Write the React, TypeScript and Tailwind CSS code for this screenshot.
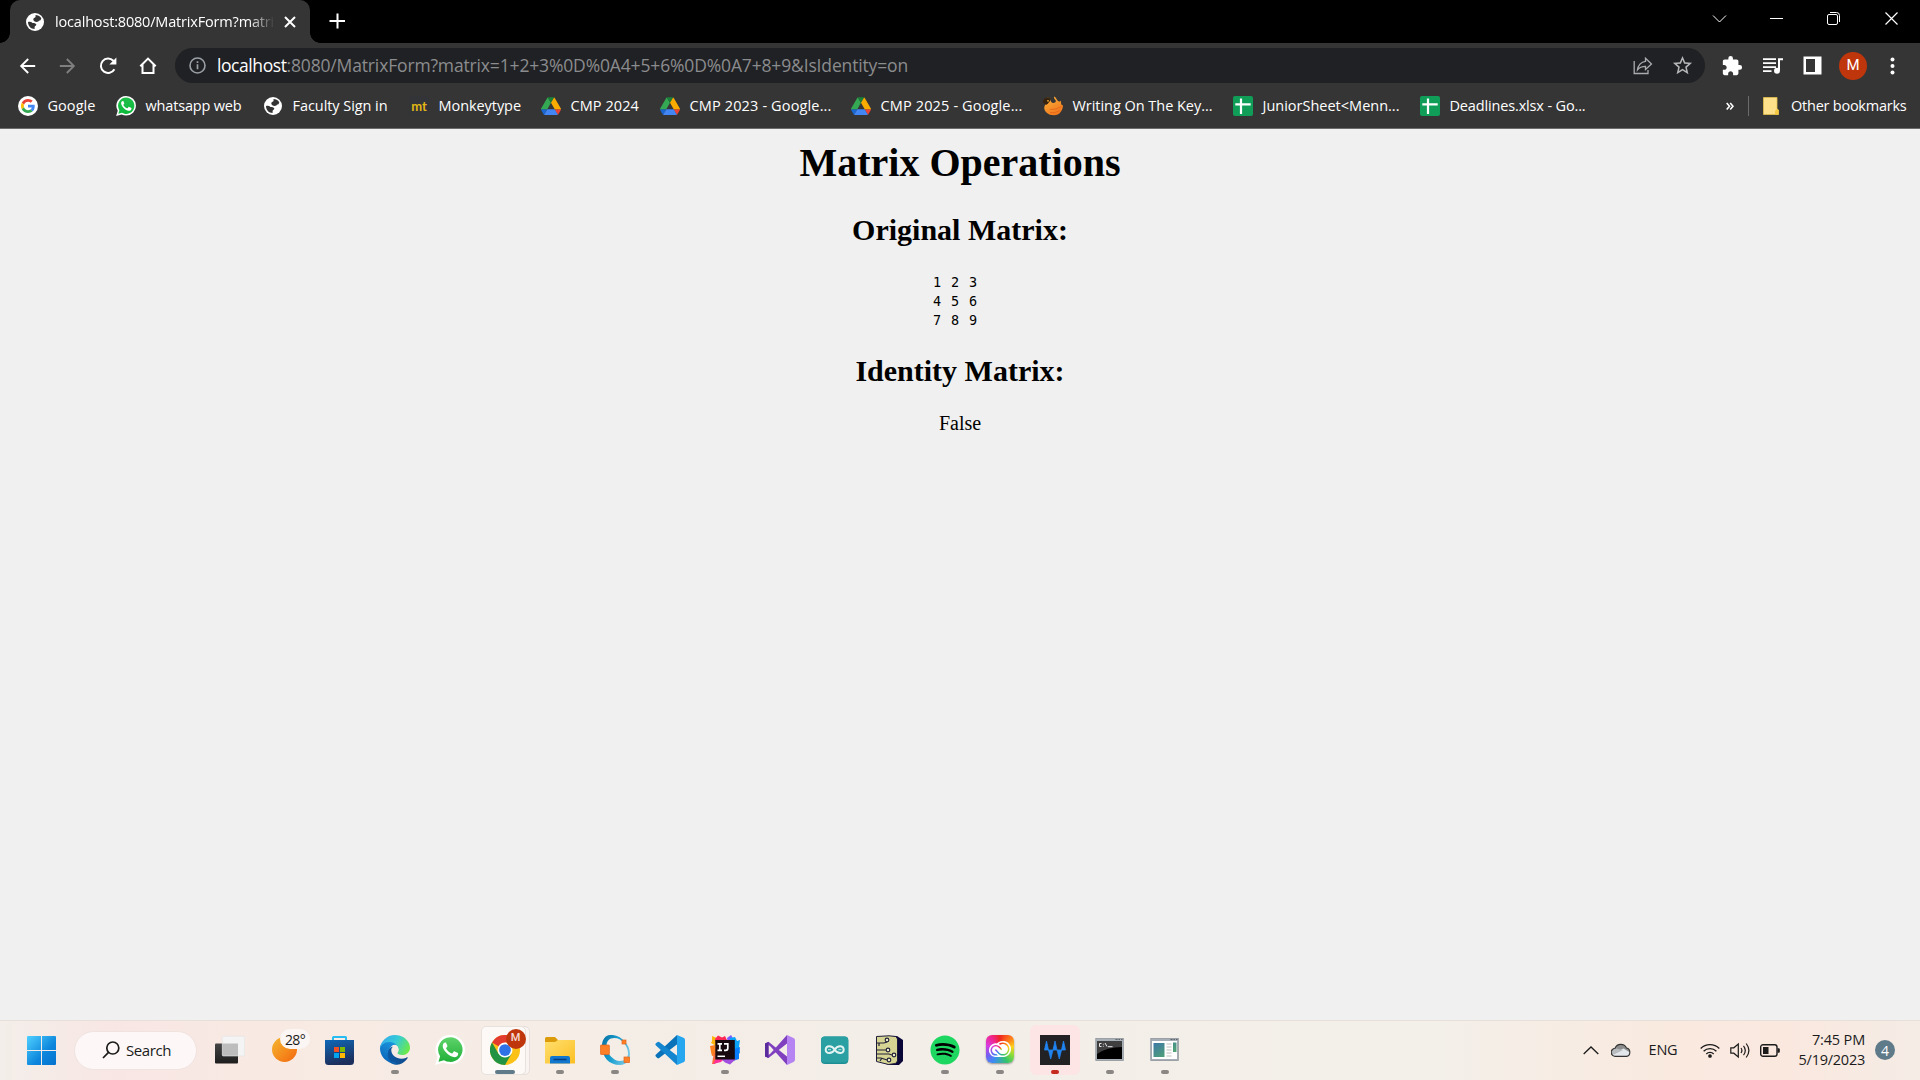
import React, { useLayoutEffect, useRef, useState } from "react";
import {
  MdArrowBack,
  MdArrowForward,
  MdExtension,
  MdStarBorder,
} from "react-icons/md";
import { FaSpotify } from "react-icons/fa";
import { SiAdobecreativecloud } from "react-icons/si";

/** Single line of text whose tracking is adjusted to fill a given width. */
function Fit({ w, children, className = "" }: { w: number; children: string; className?: string }) {
  const ref = useRef<HTMLSpanElement>(null);
  const [spacing, setSpacing] = useState(0);
  useLayoutEffect(() => {
    const natural = ref.current!.getBoundingClientRect().width;
    setSpacing((w - natural) / children.length);
  }, [w, children]);
  return (
    <span ref={ref} className={"inline-block whitespace-pre " + className} style={{ letterSpacing: spacing }}>
      {children}
    </span>
  );
}

/* ---------- small glyphs ---------- */

const Drive = () => (
  <svg width="20" height="20" viewBox="0 0 87.3 87.3">
    <g transform="translate(0 5)">
      <path d="m6.6 66.85 3.85 6.65c.8 1.4 1.95 2.5 3.3 3.3l13.75-23.8h-27.5c0 1.55.4 3.1 1.2 4.5z" fill="#1967d2" />
      <path d="m43.65 25-13.75-23.8c-1.35.8-2.5 1.9-3.3 3.3l-25.4 44a9.06 9.06 0 0 0 -1.2 4.5h27.5z" fill="#34a853" />
      <path d="m73.55 76.8c1.35-.8 2.5-1.9 3.3-3.3l1.6-2.75 7.65-13.25c.8-1.4 1.2-2.95 1.2-4.5h-27.5l5.85 11.5z" fill="#ea4335" />
      <path d="m43.65 25 13.75-23.8c-1.35-.8-2.9-1.2-4.5-1.2h-18.5c-1.6 0-3.15.45-4.5 1.2z" fill="#188038" />
      <path d="m59.8 53h-32.3l-13.75 23.8c1.35.8 2.9 1.2 4.5 1.2h50.8c1.6 0 3.15-.45 4.5-1.2z" fill="#4285f4" />
      <path d="m73.4 26.5-12.7-22c-.8-1.4-1.95-2.5-3.3-3.3l-13.75 23.8 16.15 28h27.45c0-1.55-.4-3.1-1.2-4.5z" fill="#f9ab00" />
    </g>
  </svg>
);

const GoogleG = () => (
  <svg width="20" height="20" viewBox="0 0 20 20">
    <circle cx="10" cy="10" r="10" fill="#fff" />
    <g transform="translate(3 3) scale(.2917)">
      <path fill="#EA4335" d="M24 9.5c3.54 0 6.71 1.22 9.21 3.6l6.85-6.85C35.9 2.38 30.47 0 24 0 14.62 0 6.51 5.38 2.56 13.22l7.98 6.19C12.43 13.72 17.74 9.5 24 9.5z" />
      <path fill="#4285F4" d="M46.98 24.55c0-1.57-.15-3.09-.38-4.55H24v9.02h12.94c-.58 2.96-2.26 5.48-4.78 7.18l7.73 6c4.51-4.18 7.09-10.36 7.09-17.65z" />
      <path fill="#FBBC05" d="M10.53 28.59c-.48-1.45-.76-2.99-.76-4.59s.27-3.14.76-4.59l-7.98-6.19C.92 16.46 0 20.12 0 24c0 3.88.92 7.54 2.56 10.78l7.97-6.19z" />
      <path fill="#34A853" d="M24 48c6.48 0 11.93-2.13 15.89-5.81l-7.73-6c-2.15 1.45-4.92 2.3-8.16 2.3-6.26 0-11.57-4.22-13.47-9.91l-7.98 6.19C6.51 42.62 14.62 48 24 48z" />
    </g>
  </svg>
);

const WhatsApp = ({ size, id }: { size: number; id: string }) => (
  <svg width={size} height={size} viewBox="0 0 30 30">
    <defs>
      <linearGradient id={id} x1="0" y1="0" x2="0" y2="1">
        <stop offset="0" stopColor={size > 20 ? "#5fd36a" : "#1fbf4a"} />
        <stop offset="1" stopColor={size > 20 ? "#20b038" : "#0cb93a"} />
      </linearGradient>
    </defs>
    <path d="M15.3 0a14.6 14.6 0 0 1 0 29.3c-2.5 0-4.8-.6-6.800-1.700L.2 30l2.400-8A14.600 14.600 0 0 1 15.300 0z" fill="#fff" />
    <path d="M15.300 2.300a12.300 12.300 0 1 1-6.300 22.900L3.500 26.700l1.600-5.500A12.300 12.300 0 0 1 15.300 2.300z" fill={`url(#${id})`} />
    <path d="M11.300 8.200c-.3-.7-.6-.7-1-.7-1.100 0-2.600 1.200-2.600 3.400 0 2.200 1.700 4.500 2.800 5.900 2 2.500 4.500 4.400 8 5.300 2.500.6 4.600-1 4.700-3.100 0-.8-.1-.9-.6-1.200l-2.900-1.400c-.5-.2-.8-.1-1.100.3l-1.200 1.500c-.3.300-.6.300-1 .1-2.200-.900-3.900-2.400-5.200-4.600-.2-.4-.1-.6.200-.9l.9-1.200c.200-.3.200-.6.100-.9z" fill="#fff" />
  </svg>
);

const Monkeytype = () => (
  <span className="flex size-5 items-center justify-center rounded bg-[#323437] font-['Lato'] text-[13px] leading-none font-bold text-[#e2b714]">mt</span>
);

const Firebird = () => (
  <svg width="20" height="20" viewBox="0 0 20 20">
    <defs>
      <linearGradient id="bird" x1="0" y1="0" x2=".6" y2="1">
        <stop offset="0" stopColor="#fbb53a" />
        <stop offset="1" stopColor="#f0781e" />
      </linearGradient>
    </defs>
    <path d="M2 3 C3 1.500 6.500 1 7.500 3 C7.500 5.500 8.500 7 10.500 7 C13 6.500 13.500 5 12 3.500 C11 2.500 10.800 1.200 11.200 .5 C13 1 13.500 3.500 15 5 C16.500 6 17.500 5.200 17.500 4.500 C18.300 6 18 7.500 18.300 8.500 L20 9.500 C19.800 14 17 19.300 11 19.300 C5 19.300 .8 15.500 1.300 11 C1.800 9 3 8 2 6 Z" fill="url(#bird)" />
    <path d="M.3 4 L3 1.500 L6 1.500 L8 3 L7 5 L5 7.500 L3 9 L0 6.500 Z" fill="#35220f" />
    <circle cx="5" cy="4.800" r=".9" fill="#f9b233" />
    <path d="M7 13.500Q13 14 18.500 10.500M7 16.500Q12 17.800 16.500 14.500" fill="none" stroke="#e85f1a" strokeWidth=".8" />
  </svg>
);

const Sheet = () => (
  <svg width="20" height="20" viewBox="0 0 20 20">
    <rect width="20" height="20" rx="2" fill="#0f9d58" />
    <path d="M8 2.500v15.500M2.300 8.300h15.400" stroke="#fff" strokeWidth="2.200" />
  </svg>
);

const Globe = () => (
  <svg width="18" height="18" viewBox="0 0 18 18">
    <circle cx="9" cy="9" r="9" fill="#fff" />
    <path d="M9.500 1.900 C11.500 2 14 3 15.300 5.200 L14.500 7.200 C13 7.200 12.800 8.300 11.600 8.800 C9.600 9.400 7.500 8.200 7.300 6.500 C7.200 5 9 5 9.600 4 Z" fill="#333" />
    <path d="M2 9 C4 8.600 5.500 9 6.500 9.900 C8 9.900 9.800 10 10.300 11.300 C10.400 13 8.800 12.800 8.600 14 L8.600 16 C5 16 2 13.200 2 9 Z" fill="#333" />
  </svg>
);

/* ---------- browser chrome ---------- */

function TitleBar() {
  return (
    <div className="flex h-[43px] bg-black pl-[10px]">
      <div className="relative flex h-[43px] w-[300px] items-center rounded-t-[10px] bg-[#353535] pl-4">
        <span className="absolute bottom-0 -left-[10px] size-[10px] bg-[radial-gradient(circle_at_0_0,#000_9.500px,#353535_10px)]" />
        <span className="absolute -right-[10px] bottom-0 size-[10px] bg-[radial-gradient(circle_at_100%_0,#000_9.500px,#353535_10px)]" />
        <Globe />
        <span className="ml-[11px] w-[220px] overflow-hidden mask-r-from-88% mask-r-to-100% text-[14.500px] leading-5 text-white">
          <Fit w={219}>localhost:8080/MatrixForm?matri</Fit>
        </span>
        <svg className="ml-[9px]" width="12" height="12" viewBox="0 0 12 12">
          <path d="M1 1l10 10M11 1L1 11" stroke="#fff" strokeWidth="2" />
        </svg>
      </div>
      <svg className="mt-[13px] ml-[19px]" width="16" height="16" viewBox="0 0 16 16">
        <path d="M8.500 .5v15M.5 8h15.500" stroke="#fff" strokeWidth="2" />
      </svg>
      <div className="mt-[11px] ml-auto flex h-[15px] items-center pr-[22px] text-white">
        <svg width="15" height="15" viewBox="0 0 15 15" fill="none" stroke="currentColor">
          <path d="M1 4.500l6.500 6.500L14 4.500" />
        </svg>
        <svg className="ml-[43px]" width="13" height="15" viewBox="0 0 13 15">
          <path d="M0 7.500h13" stroke="currentColor" />
        </svg>
        <svg className="ml-[44px]" width="13" height="15" viewBox="0 0 13 15" fill="none" stroke="currentColor">
          <rect x=".5" y="3.500" width="10" height="10" rx="1.500" />
          <path d="M3 1.500h6.500a3 3 0 0 1 3 3V11" />
        </svg>
        <svg className="ml-[45px]" width="13" height="15" viewBox="0 0 13 15" stroke="currentColor">
          <path d="M.5 1.500l12 12M12.500 1.500l-12 12" strokeWidth="1.200" />
        </svg>
      </div>
    </div>
  );
}

function Toolbar() {
  return (
    <div className="flex h-[45px] items-center bg-[#353535] pl-4">
      <MdArrowBack className="h-6 w-[23px] text-white" />
      <MdArrowForward className="ml-[17px] h-6 w-[23px] text-[#7f7f7f]" />
      <svg className="ml-[19.500px]" width="19" height="18" viewBox="0 0 19 18" fill="none">
        <path d="M15.400 12.200A7.200 7.200 0 1 1 14.300 3.800L16 5.600" stroke="#fff" strokeWidth="2" />
        <path d="M17.400 .6V7.600H10.400z" fill="#fff" />
      </svg>
      <svg className="ml-[21px]" width="18" height="18" viewBox="0 0 18 18" fill="none">
        <path d="M1.300 9.300L9 1.600l7.700 7.700M3.500 7.500V16H14.500V7.500" stroke="#fff" strokeWidth="2" />
      </svg>
      <div className="ml-[18.500px] flex h-[35px] w-[1530px] items-center rounded-full bg-[#202124] pl-[14px] text-[17.500px]">
        <svg width="17" height="17" viewBox="0 0 17 17">
          <circle cx="8.500" cy="8.500" r="7.500" fill="none" stroke="#9aa0a6" strokeWidth="1.600" />
          <path d="M8.500 7.300v5M8.500 4.200v1.700" stroke="#9aa0a6" strokeWidth="1.700" />
        </svg>
        <span className="ml-[11px] flex pb-[2px] leading-[22px]">
          <Fit w={69.5} className="text-white">localhost</Fit>
          <Fit w={621.5} className="text-[#8b8c8e]">:8080/MatrixForm?matrix=1+2+3%0D%0A4+5+6%0D%0A7+8+9&IsIdentity=on</Fit>
        </span>
        <svg className="ml-auto" width="20" height="18" viewBox="0 0 20 18" fill="none" stroke="#a9abad" strokeWidth="1.300">
          <path d="M1.200 4v12.500H15V13" />
          <path d="M12.500 1.200L18.500 7l-6 5.500V9.300C9 9.300 6.500 10.300 4.500 12.800 5 8.500 8 4.700 12.500 4.300z" />
        </svg>
        <MdStarBorder className="mr-[11px] ml-[18px] size-[23px] text-[#b4b6b8]" />
      </div>
      <MdExtension className="ml-4 size-[22px] text-white" />
      <svg className="ml-[20px]" width="20" height="16" viewBox="0 0 20 16" fill="none">
        <path d="M0 1.200h13M0 5.200h13M0 9.200h13M0 13.200h8.500" stroke="#fff" strokeWidth="1.700" />
        <path d="M16 12.500V1.200h4" stroke="#fff" strokeWidth="2" />
        <circle cx="14" cy="12.700" r="3" fill="#fff" />
      </svg>
      <svg className="ml-[20px]" width="19" height="19" viewBox="0 0 19 19">
        <path d="M.5 .5h18v18H.5z M3 3v13h9V3z" fill="#fff" fillRule="evenodd" />
      </svg>
      <span className="ml-[17px] flex size-7 items-center justify-center rounded-full bg-[#bf360c] font-['Roboto'] text-[15px] text-white">M</span>
      <svg className="ml-[23px]" width="5" height="18" viewBox="0 0 5 18" fill="#fff">
        <circle cx="2.500" cy="2.500" r="2" />
        <circle cx="2.500" cy="9" r="2" />
        <circle cx="2.500" cy="15.500" r="2" />
      </svg>
    </div>
  );
}

const bookmarks: { icon: React.ReactNode; label: string; w: number; cell: string }[] = [
  { icon: <GoogleG />, label: "Google", w: 48, cell: "w-[98px]" },
  { icon: <WhatsApp size={20} id="wa-small" />, label: "whatsapp web", w: 96, cell: "w-[147px]" },
  { icon: <Globe />, label: "Faculty Sign in", w: 95, cell: "w-[146px]" },
  { icon: <Monkeytype />, label: "Monkeytype", w: 82.5, cell: "w-[132px]" },
  { icon: <Drive />, label: "CMP 2024", w: 68.5, cell: "w-[119px]" },
  { icon: <Drive />, label: "CMP 2023 - Google...", w: 142, cell: "w-[191px]" },
  { icon: <Drive />, label: "CMP 2025 - Google...", w: 142, cell: "w-[192px]" },
  { icon: <Firebird />, label: "Writing On The Key...", w: 140, cell: "w-[190px]" },
  { icon: <Sheet />, label: "JuniorSheet<Menn...", w: 137, cell: "w-[187px]" },
  { icon: <Sheet />, label: "Deadlines.xlsx - Go...", w: 136, cell: "w-[187px]" },
];

function BookmarksBar() {
  return (
    <div className="flex h-[41px] items-center border-b border-[#6b6b6b] bg-[#353535] pb-1 pl-[18px] text-[14.500px] text-white">
      {bookmarks.map((b) => (
        <div key={b.label} className={"flex shrink-0 items-center " + b.cell}>
          <span className="mr-[9.500px] flex size-5 items-center justify-center">{b.icon}</span>
          <Fit w={b.w} className="leading-5">{b.label}</Fit>
        </div>
      ))}
      <svg className="ml-auto" width="8" height="9" viewBox="0 0 8 9" fill="none" stroke="#fff" strokeWidth="1.600">
        <path d="M.7 1l2.800 3.300L.7 7.600M4.200 1L7 4.300 4.200 7.600" />
      </svg>
      <span className="ml-[14px] h-5 w-px bg-[#6b6b6b]" />
      <svg className="ml-[14px]" width="16" height="18" viewBox="0 0 16 18">
        <path d="M.5 .5H14V12L15.500 13V17.500H.5z" fill="#ffe08a" stroke="#e5c04d" strokeWidth=".8" />
        <path d="M12 17.500V14l2-2 1.500 1v4.500z" fill="#f5c93f" />
      </svg>
      <Fit w={115.5} className="mr-[13.500px] ml-3 leading-5">Other bookmarks</Fit>
    </div>
  );
}

/* ---------- page ---------- */

function Page() {
  return (
    <main className="flex h-[891px] flex-col items-center bg-[#f0f0f0] pt-[11px] font-['Liberation_Serif',serif] text-black">
      <h1 className="text-[40px] leading-[46px] font-bold">Matrix Operations</h1>
      <h2 className="mt-[27px] text-[30px] leading-[34px] font-bold">Original Matrix:</h2>
      <pre className="mt-[26px] font-['DejaVu_Sans_Mono',monospace] text-[13.500px] leading-[19px] tracking-[0.87px]">{"1 2 3 \n4 5 6 \n7 8 9 "}</pre>
      <h2 className="mt-[24px] text-[30px] leading-[34px] font-bold">Identity Matrix:</h2>
      <p className="mt-[24px] text-[20px] leading-[23px]">False</p>
    </main>
  );
}

/* ---------- taskbar ---------- */

const TaskView = () => (
  <svg width="30" height="30" viewBox="0 0 30 30">
    <defs>
      <linearGradient id="tv" x1="0" y1="0" x2="0" y2="1">
        <stop offset="0" stopColor="#454545" />
        <stop offset="1" stopColor="#1d1d1d" />
      </linearGradient>
    </defs>
    <rect x="0" y="8.500" width="23" height="20" rx="1" fill="url(#tv)" />
    <rect x="7.300" y="1.300" width="22.400" height="19.700" rx="1" fill="#f4f4f4" stroke="#e2e2e2" strokeWidth=".6" />
    <rect x="7.500" y="8.500" width="15.500" height="12.200" fill="#bdbdbd" />
  </svg>
);

const Weather = () => (
  <div className="relative size-[30px]">
    <span className="absolute top-[2px] left-[2px] size-[25px] rounded-full bg-linear-to-br from-[#f3b62e] to-[#f3650d]" />
    <span className="absolute -top-[6px] left-[10px] flex h-5 w-[30px] items-center justify-center rounded-full bg-[#fbf6f3] text-[14px] text-[#1b1b1b]">
      <Fit w={20}>28°</Fit>
    </span>
  </div>
);

const Store = () => (
  <svg width="30" height="30" viewBox="0 0 30 30">
    <defs>
      <linearGradient id="store" x1="0" y1="0" x2=".3" y2="1">
        <stop offset="0" stopColor="#0f68b8" />
        <stop offset="1" stopColor="#1c2f5c" />
      </linearGradient>
    </defs>
    <path d="M8 7V2.500Q8 2 8.500 2H20.500Q21 2 21 2.500V7" fill="none" stroke="#27bdf3" strokeWidth="2" />
    <path d="M0 5h29v21.500a3.500 3.500 0 0 1-3.500 3.500H3.500A3.500 3.500 0 0 1 0 26.500z" fill="url(#store)" />
    <path d="M9 12h5v5H9z" fill="#f25022" />
    <path d="M15 12h5v5h-5z" fill="#7fba00" />
    <path d="M9 18h5v5H9z" fill="#00a4ef" />
    <path d="M15 18h5v5h-5z" fill="#ffb900" />
  </svg>
);

const Edge = () => (
  <svg width="30" height="30" viewBox="0 0 256 256">
    <defs>
      <linearGradient id="e1" x1="0" y1=".6" x2="1" y2=".6">
        <stop offset="0" stopColor="#0c59a4" />
        <stop offset="1" stopColor="#114a8b" />
      </linearGradient>
      <linearGradient id="e2" x1=".8" y1="0" x2=".3" y2="1">
        <stop offset="0" stopColor="#1b9de2" />
        <stop offset=".5" stopColor="#1482cf" />
        <stop offset="1" stopColor="#0a63b8" />
      </linearGradient>
      <linearGradient id="e3" x1="0" y1=".2" x2="1" y2=".6">
        <stop offset="0" stopColor="#35a8ec" />
        <stop offset=".5" stopColor="#36cbd8" />
        <stop offset="1" stopColor="#6be94a" />
      </linearGradient>
    </defs>
    <path d="M231 190.500c-3.400 1.800-6.900 3.300-10.500 4.700a101.900 101.900 0 0 1-35.900 6.500c-47.300 0-88.500-32.500-88.500-74.300.1-11.400 6.400-21.900 16.400-27.300-42.800 1.800-53.800 46.400-53.800 72.500 0 73.900 68.100 81.400 82.800 81.400 7.900 0 19.800-2.300 27-4.600l1.300-.4a128.300 128.300 0 0 0 66.600-52.800 4 4 0 0 0-5.400-5.700z" fill="url(#e1)" />
    <path d="M105.700 241.400a79.200 79.200 0 0 1-22.700-21.300c-29.700-40.700-20.800-97.900 20-127.600 3.100-2.200 6.200-4.300 9.500-6.200 3.200-1.500 8.400-4.100 15.500-4a32.400 32.400 0 0 1 25.700 13 32 32 0 0 1 6.400 18.700c0-.2 24.500-79.600-80-79.600C36.200 34.400.1 76 .1 112.600c-.2 19.300 4 38.500 12.100 56a128 128 0 0 0 156.400 67.100 75.500 75.500 0 0 1-62.800-8z" fill="url(#e2)" />
    <path d="M152.300 148.900c-.9 1-3.400 2.500-3.400 5.700 0 2.600 1.700 5.200 4.800 7.300 14.300 10 41.400 8.600 41.500 8.600a59.500 59.500 0 0 0 30.300-8.300 61.400 61.400 0 0 0 30.400-52.900c.3-22.400-8-37.300-11.300-43.900C223.500 23.900 177.700 0 128 0A128 128 0 0 0 0 126.200c.5-36.500 36.800-66 80-66 3.500 0 23.500.3 42 10.100 16.300 8.600 24.900 18.900 30.800 29.200 6.200 10.700 7.300 24.100 7.300 29.500 0 5.300-2.700 13.300-7.800 19.900z" fill="url(#e3)" />
  </svg>
);

const Chrome = () => (
  <div className="relative h-[49px] w-[49px]">
    <span className="absolute top-0 left-2 h-[49px] w-[41px] rounded-[5px] border border-[#e6dfda] bg-[#f9f4f1]" />
    <span className="absolute top-0 left-0 h-[49px] w-[45px] rounded-[5px] border border-[#e8e1dc] bg-[#fcf9f7]" />
    <svg className="absolute top-[9px] left-[9px]" width="30" height="30" viewBox="0 0 48 48">
      <circle cx="24" cy="24" r="24" fill="#fbc116" />
      <path d="M24 24L3.200 12A24 24 0 0 1 44.800 12H24z" fill="#e33b2e" />
      <path d="M3.200 12A24 24 0 0 0 24 48L34.400 30 24 24 13.600 30z" fill="#229342" />
      <circle cx="24" cy="24" r="12" fill="#fff" />
      <circle cx="24" cy="24" r="9.400" fill="#2f72e8" />
    </svg>
    <span className="absolute top-[3px] left-[25px] flex size-5 items-center justify-center rounded-full bg-[#bf360c] font-['Roboto'] text-[11px] font-medium text-[#f5ddd6]">M</span>
  </div>
);

const Explorer = () => (
  <svg width="30" height="30" viewBox="0 0 30 30">
    <defs>
      <linearGradient id="fold" x1="0" y1="0" x2="1" y2="1">
        <stop offset="0" stopColor="#ffdf6e" />
        <stop offset="1" stopColor="#fcbf24" />
      </linearGradient>
    </defs>
    <path d="M0 3.500A1.500 1.500 0 0 1 1.500 2H10l3.500 3.500L10 9H0z" fill="#dc9b0a" />
    <path d="M0 7h10l3-2h17v23.500H0z" fill="url(#fold)" />
    <path d="M5 28.500V23a2 2 0 0 1 2-2h16a2 2 0 0 1 2 2v5.500z" fill="#1277cf" />
    <path d="M8.500 24.500h13" stroke="#0a3f7d" strokeWidth="1.500" />
  </svg>
);

const Octave = () => (
  <svg width="30" height="30" viewBox="0 0 30 30">
    <defs>
      <linearGradient id="oct" x1="0" y1=".3" x2="1" y2=".7">
        <stop offset="0" stopColor="#0a78aa" />
        <stop offset=".45" stopColor="#1b9fd0" />
        <stop offset="1" stopColor="#7fcde8" />
      </linearGradient>
    </defs>
    <path fillRule="evenodd" d="M10 0C20 -1 30 9 30 19C30 26 26 30 20 30C9 30 2 22 2 11C2 5 5 .5 10 0z M14.500 3C9 3 6.500 6.500 6.500 11C6.500 18 13 26 20 26C25.500 26 28 23 28 18C28 11 21.500 3 14.500 3z" fill="url(#oct)" />
    <g fill="#ff7f27" stroke="#e0661b" strokeWidth=".7">
      <rect x=".4" y="10" width="9" height="9.500" rx=".8" />
      <rect x="22" y="5" width="4" height="4" />
      <rect x="24" y="22" width="5.600" height="5.600" />
    </g>
  </svg>
);

const VSCode = () => (
  <svg width="30" height="30" viewBox="0 0 30 30">
    <path d="M22 0L1 19.500a1.500 1.500 0 0 0 0 2.200l1.300 1.300a1.500 1.500 0 0 0 1.900.1L22.500 9z" fill="#0a72b8" />
    <path d="M22 30L1 10.500a1.500 1.500 0 0 1 0-2.200L2.300 7.200a1.500 1.500 0 0 1 1.900-.1L22.500 21z" fill="#1485cf" />
    <path d="M22 0l6.500 2.800A2.500 2.500 0 0 1 30 5v20a2.500 2.500 0 0 1-1.500 2.300L22 30z" fill="#27a6f0" />
  </svg>
);

const VisualStudio = () => (
  <svg width="30" height="30" viewBox="0 0 30 30">
    <path d="M22 0L5.500 18.500 3.500 20V10l2 1.500L22 30V21.500L3.500 6.800 0 8.500v13L3.500 23 22 8.500z" fill="#7f3fbf" />
    <path d="M0 8.500L3.500 7v16L0 21.500z" fill="#5a2b9b" />
    <path d="M22 0l6.500 3A2.500 2.500 0 0 1 30 5.200v19.600a2.500 2.500 0 0 1-1.500 2.200L22 30z" fill="#b583f2" />
  </svg>
);

const IntelliJ = () => (
  <svg width="30" height="30" viewBox="0 0 30 30">
    <path d="M2 1l5 2-1 8-5-3 1-2z" fill="#fdb60d" />
    <path d="M5 4l3-3.500 4 2L15 1l3 6-11 5z" fill="#fe2857" />
    <path d="M17 3l4-3 3 5-6 3z" fill="#7a5cff" />
    <path d="M20 3l5-1 2 4 3-1-1 7 1 6-5 3-5-9z" fill="#0aa2f7" />
    <path d="M24 14l6-2-1 7 0 5-6 2z" fill="#087cfa" />
    <path d="M0 11l5-1 2 10-5 1-1-4z" fill="#fc801d" />
    <path d="M4 17l4 7-3 5-3 0 1-6z" fill="#fd6a3c" />
    <path d="M3 29l4-7 8 1-4 4z" fill="#fe2f9b" />
    <path d="M11 24l12-1 3 1-6 5.500-5-2z" fill="#a04fe0" />
    <path d="M5.300 5h19.500v19.500H5.300z" fill="#17090d" />
    <path d="M7.500 8.800h4.500M9.800 8.800v6.500M7.500 15.300h4.500M14 8.800h3.800v4.500q0 2-2 2H14" fill="none" stroke="#fff" strokeWidth="1.700" />
    <path d="M7.500 21.300h7.500" stroke="#fff" strokeWidth="1.500" />
  </svg>
);

const Arduino = () => (
  <svg width="30" height="30" viewBox="0 0 30 30">
    <rect x="1" y="1.500" width="27.300" height="27.500" rx="4" fill="#1d8f94" />
    <rect x="1" y="1.500" width="27.300" height="26" rx="4" fill="#2ba0a3" />
    <path d="M14.700 14.700C12.200 10.500 5.700 10 5.700 14.700C5.700 19.400 12.200 18.900 14.700 14.700C17.200 10.500 23.700 10 23.700 14.700C23.700 19.400 17.200 18.900 14.700 14.700z" fill="none" stroke="#e2f3f2" strokeWidth="2" />
    <path d="M8 14.700h3M18.400 14.700h3" stroke="#bfe3e2" strokeWidth="1" />
  </svg>
);

const Circuit = () => (
  <svg width="30" height="30" viewBox="0 0 30 30">
    <path d="M9 1H22L28 5V26L24 30H14L9 28z" fill="#0b0638" />
    <path d="M1.500 1.500L14 .8 21 1.500 22.500 4v22l-2 2.500-7 1L1.500 26.500z" fill="#d6d493" stroke="#1b1a3a" strokeWidth="1" />
    <g fill="none" stroke="#22213c" strokeWidth="1.200">
      <path d="M2 8h7l3-1M2 15h9M2 19h12l3 1M4 11v-3M2 23h4l6 2M5 26l2-3" />
      <circle cx="12" cy="5" r="1.800" fill="#efeecb" />
      <circle cx="13" cy="15" r="1.800" fill="#efeecb" />
      <circle cx="19" cy="20" r="1.800" fill="#efeecb" />
      <circle cx="14" cy="25" r="1.800" fill="#efeecb" />
    </g>
  </svg>
);

const Spotify = () => (
  <div className="flex size-[30px] items-center justify-center rounded-full bg-[radial-gradient(circle,#000_60%,transparent_62%)]">
    <FaSpotify className="size-[30px] text-[#1ed760]" />
  </div>
);

const CreativeCloud = () => (
  <div className="mb-[2px] flex size-[28px] items-center justify-center rounded-[6px] bg-[conic-gradient(from_0deg,#f0261f,#ff7a1a_45deg,#ffd21a_80deg,#8fdc3a_115deg,#35c46a_150deg,#3d8bf5_210deg,#7a5cf0_245deg,#d93be0_285deg,#f0268c_325deg,#f0261f)] shadow-[0_1px_2px_rgba(0,0,0,0.4)]">
    <SiAdobecreativecloud className="size-[22px] text-white" />
  </div>
);

const Wave = () => (
  <div className="flex size-[50px] items-center justify-center rounded-[6px] bg-[#fde4e5]">
    <svg width="30" height="30" viewBox="0 0 30 30">
      <path d="M0 0h30v30H0z" fill="#222224" />
      <path d="M4.500 15L6.500 6l2 9zM13 15L15 6l2 9zM21.500 15L23.500 6l2 9zM8.500 15h4.500L10.700 24zM17 15h4.500L19.300 24z" fill="#1f83f0" stroke="#1f83f0" strokeWidth=".8" />
    </svg>
  </div>
);

const Terminal = () => (
  <svg width="30" height="30" viewBox="0 0 30 30">
    <rect x=".8" y="3.500" width="27.500" height="22" fill="#aab0b8" stroke="#8e949b" strokeWidth=".8" />
    <path d="M20.500 4.500h2M23.500 4.500h1.500M26 4.500h1.500" stroke="#5d636b" strokeWidth="1" />
    <path d="M2 6h25v18H2z" fill="#000" />
    <path d="M2 6h25v6Q12 12 2 19z" fill="#3f3f3f" />
    <path d="M6.500 8.500H4.500v3h2M8.300 8.800v.8M8.300 10.800v.8M10 8l2 3.500M13 11.700H17.500" fill="none" stroke="#e8e8e8" strokeWidth="1" />
  </svg>
);

const AppWindow = () => (
  <svg width="30" height="30" viewBox="0 0 30 30">
    <defs>
      <linearGradient id="aw" x1="0" y1="0" x2="1" y2="1">
        <stop offset="0" stopColor="#3d78a8" />
        <stop offset="1" stopColor="#56ae66" />
      </linearGradient>
    </defs>
    <rect x=".8" y="3.500" width="27.500" height="22" fill="#a7adb6" stroke="#8e949b" strokeWidth=".8" />
    <path d="M20.500 4.500h2M23.500 4.500h1.500M26 4.500h1.500" stroke="#5d636b" strokeWidth="1" />
    <path d="M2 6h25v18H2z" fill="#fff" />
    <path d="M3.500 8h11v14h-11zM23 7.500H26.500v9.500H23z" fill="url(#aw)" />
    <path d="M16.500 9h5M16.500 12h5M16.500 15h5M16.500 18h5M16.500 21h5" stroke="#d3d3d3" strokeWidth="1.300" />
  </svg>
);

const apps: { name: string; icon: React.ReactNode; mark?: string }[] = [
  { name: "task view", icon: <TaskView /> },
  { name: "weather", icon: <Weather /> },
  { name: "store", icon: <Store /> },
  { name: "edge", icon: <Edge />, mark: "w-2 bg-[#898683]" },
  { name: "whatsapp", icon: <WhatsApp size={30} id="wa-large" /> },
  { name: "chrome", icon: <Chrome />, mark: "w-5 bg-[#5f7a89]" },
  { name: "explorer", icon: <Explorer />, mark: "w-2 bg-[#898683]" },
  { name: "octave", icon: <Octave />, mark: "w-2 bg-[#898683]" },
  { name: "vscode", icon: <VSCode /> },
  { name: "intellij", icon: <IntelliJ />, mark: "w-2 bg-[#898683]" },
  { name: "visual studio", icon: <VisualStudio /> },
  { name: "arduino", icon: <Arduino /> },
  { name: "circuit", icon: <Circuit /> },
  { name: "spotify", icon: <Spotify />, mark: "w-2 bg-[#898683]" },
  { name: "creative cloud", icon: <CreativeCloud />, mark: "w-2 bg-[#898683]" },
  { name: "wave", icon: <Wave />, mark: "w-2 bg-[#c42b1c]" },
  { name: "terminal", icon: <Terminal />, mark: "w-2 bg-[#898683]" },
  { name: "window", icon: <AppWindow />, mark: "w-2 bg-[#898683]" },
];

function Taskbar() {
  return (
    <div className="flex h-[60px] items-center border-t border-[#e6dfda] bg-[linear-gradient(90deg,#f3eee9_0%,#f8e6e4_6%,#f8eae3_14%,#f5ede6_28%,#f3eee8_50%,#f3efe9_75%,#f9eae0_86%,#fae8df_93%,#f4ece5_100%)] pb-px pl-[27px]">
      <svg width="29" height="29" viewBox="0 0 29 29">
        <defs>
          <linearGradient id="win" x1="0" y1="0" x2="1" y2="1">
            <stop offset="0" stopColor="#4fd0ff" />
            <stop offset=".6" stopColor="#0c86dc" />
            <stop offset="1" stopColor="#0672cf" />
          </linearGradient>
        </defs>
        <path d="M1 0h13v14H0V1a1 1 0 0 1 1-1zM15 0h13a1 1 0 0 1 1 1v13H15zM0 15h14v14H1a1 1 0 0 1-1-1zM15 15h14v13a1 1 0 0 1-1 1H15z" fill="url(#win)" />
      </svg>
      <div className="ml-[18px] flex h-[39px] w-[123px] items-center rounded-full border border-[#f0e3df] bg-[#fdf8f7] pl-[27px] text-[15px] text-[#1b1b1b]">
        <svg width="18" height="18" viewBox="0 0 18 18" fill="none" stroke="#1b1b1b" strokeWidth="1.700">
          <circle cx="10.800" cy="7" r="6" />
          <path d="M6.500 11.300L1 17" />
        </svg>
        <Fit w={45} className="ml-[6px] leading-5">Search</Fit>
      </div>
      <div className="ml-[5.500px] flex h-[58px]">
        {apps.map((a) => (
          <div key={a.name} className="relative flex w-[55px] items-center justify-center">
            {a.icon}
            {a.mark && <span className={"absolute bottom-[5px] h-1 rounded-full " + a.mark} />}
          </div>
        ))}
      </div>
      <div className="ml-auto flex items-center text-[14.500px] text-[#1b1b1b]">
        <svg width="16" height="9" viewBox="0 0 16 9" fill="none" stroke="#1b1b1b" strokeWidth="1.300">
          <path d="M.7 8L8 1l7.300 7" />
        </svg>
        <svg className="ml-3" width="20" height="14" viewBox="0 0 20 14">
          <path d="M4.500 13.400A4 4 0 0 1 4 5.300 6.300 6.300 0 0 1 15.500 5 4.300 4.300 0 0 1 15.500 13.400z" fill="#8e8e8e" />
          <path d="M1 11L12.500 5.600 19 9.500Q19 13 15.500 13H4.500Q2 13 1 11z" fill="#e3e6ea" />
          <path d="M1 8.500Q4 4 8 6.200L12 7 3 11.500Q1 11 1 8.500z" fill="#b9bcbf" />
          <path d="M4.500 13.400A4 4 0 0 1 4 5.300 6.300 6.300 0 0 1 15.500 5 4.300 4.300 0 0 1 15.500 13.400z" fill="none" stroke="#333" strokeWidth="1.100" />
        </svg>
        <Fit w={29} className="ml-[18px]">ENG</Fit>
        <svg className="ml-[22px]" width="20" height="15" viewBox="0 0 20 15" fill="none" stroke="#1b1b1b" strokeWidth="1.300">
          <path d="M.7 5.500a13 13 0 0 1 18.600 0M3.600 8.300a9 9 0 0 1 12.800 0M6.300 11a5.200 5.200 0 0 1 7.400 0" />
          <circle cx="10" cy="13" r="1.200" fill="#1b1b1b" />
        </svg>
        <svg className="ml-[10px]" width="20" height="17" viewBox="0 0 20 17" fill="none" stroke="#1b1b1b" strokeWidth="1.200">
          <path d="M.8 5.800h3L8.300 2v13l-4.500-3.800h-3z" />
          <path d="M11 6q1.800 2.500 0 5M13.500 3.800q3.600 4.700 0 9.400M16.200 1.500q5.400 7 0 14" />
        </svg>
        <svg className="ml-[10px]" width="20" height="13" viewBox="0 0 20 13">
          <rect x=".7" y=".7" width="16.300" height="11.600" rx="2.300" fill="none" stroke="#1b1b1b" strokeWidth="1.400" />
          <path d="M3 3h5.500v7H3zM17.500 4.300h1.300q1 0 1 1v2.400q0 1-1 1h-1.300z" fill="#1b1b1b" />
        </svg>
        <div className="ml-[19px] flex flex-col items-end leading-5">
          <Fit w={53}>7:45 PM</Fit>
          <Fit w={66.5}>5/19/2023</Fit>
        </div>
        <span className="mr-[25px] ml-[10px] flex size-5 items-center justify-center rounded-full bg-[#5f7a89] text-[14px] text-white">4</span>
      </div>
    </div>
  );
}

export default function App() {
  return (
    <div className="flex h-[1080px] w-[1920px] flex-col overflow-hidden font-['Open_Sans',sans-serif]">
      <TitleBar />
      <Toolbar />
      <BookmarksBar />
      <Page />
      <Taskbar />
    </div>
  );
}
